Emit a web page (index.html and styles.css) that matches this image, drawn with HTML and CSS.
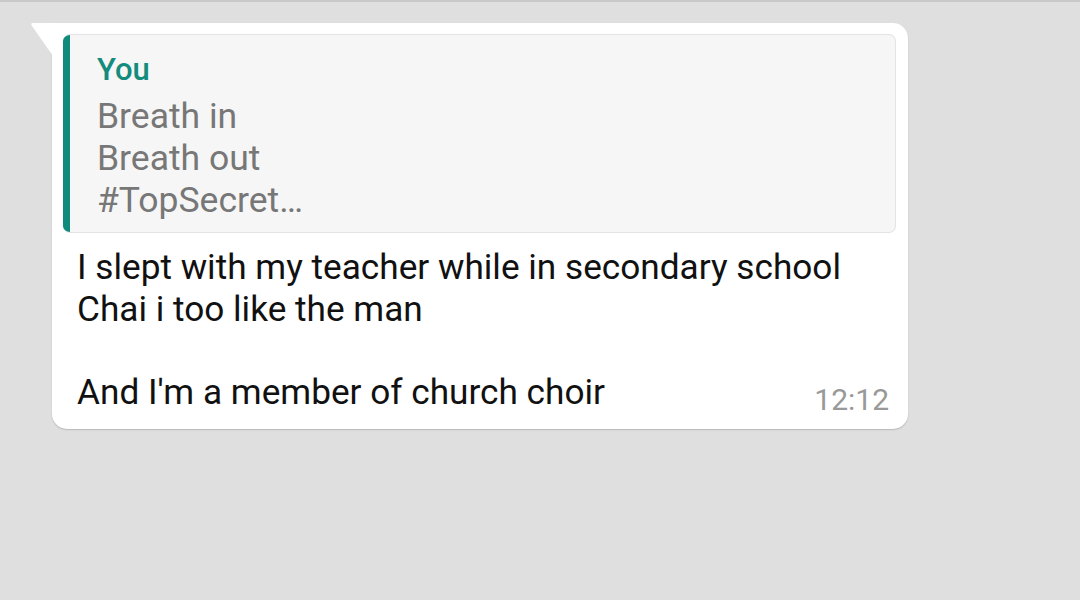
FILE: index.html
```html
<!DOCTYPE html>
<html>
<head>
<meta charset="utf-8">
<link rel="stylesheet" href="styles.css">
</head>
<body>
<div class="topline"></div>
<div class="chat">
  <div class="bubble">
    <svg class="tail" width="24" height="34" viewBox="0 0 24 34"><path d="M23 0 L3 0 Q0 0 2 3 L23 33 Z" fill="#ffffff"/></svg>
    <div class="quote">
      <div class="quote-bar"></div>
      <div class="quote-body">
        <div class="quote-author">You</div>
        <div class="quote-text">Breath in<br>Breath out<br>#TopSecret…</div>
      </div>
    </div>
    <div class="message">
      <div class="message-text">I slept with my teacher while in secondary school<br>Chai i too like the man<br>&nbsp;</div>
      <div class="last-line">
        <span class="message-text">And I'm a member of church choir</span>
        <span class="time">12:12</span>
      </div>
    </div>
  </div>
</div>
</body>
</html>
```

FILE: styles.css
```css
html, body {
  margin: 0;
  padding: 0;
  background: #dfdfdf;
  height: 100%;
  font-family: Roboto, "Liberation Sans", sans-serif;
}
.topline {
  height: 2px;
  background: #c9c9c9;
}
.chat {
  padding: 21px 0 0 52px;
}
.bubble {
  position: relative;
  width: 856px;
  box-sizing: border-box;
  background: #ffffff;
  border-radius: 0 15px 15px 15px;
  box-shadow: 0 1px 1.5px rgba(0, 0, 0, 0.18);
  padding: 11px 12px 16px 11px;
}
.tail {
  position: absolute;
  left: -22px;
  top: 0;
}
.quote {
  display: flex;
  background: #f6f6f6;
  border: 1px solid #e4e4e4;
  border-left: none;
  border-radius: 7px;
  overflow: hidden;
  height: 199px;
  box-sizing: border-box;
}
.quote-bar {
  width: 7px;
  background: #0f8a7b;
  flex: none;
}
.quote-body {
  padding: 15px 0 0 27px;
}
.quote-author {
  color: #138b7d;
  font-weight: 500;
  font-size: 31px;
  line-height: 40px;
  margin-bottom: 5px;
}
.quote-text {
  color: #777777;
  font-size: 35.5px;
  line-height: 42px;
}
.message {
  padding: 14px 7px 0 14px;
}
.message-text {
  color: #111111;
  font-size: 35.2px;
  line-height: 41.5px;
  white-space: nowrap;
}
.last-line {
  display: flex;
  justify-content: space-between;
  align-items: flex-end;
}
.time {
  color: #999999;
  font-size: 30px;
  line-height: 32px;
  margin-bottom: -3px;
}
```
